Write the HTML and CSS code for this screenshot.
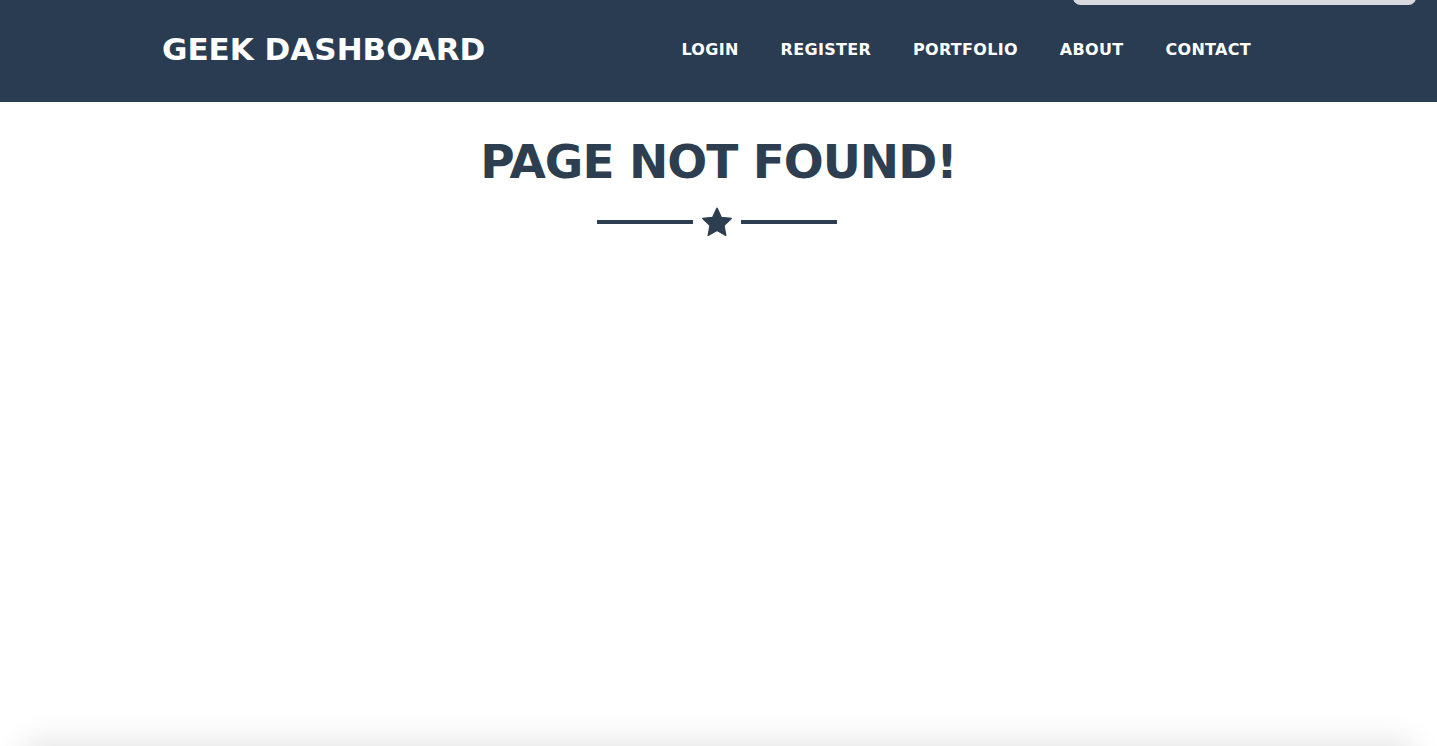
FILE: index.html
```html
<!DOCTYPE html>
<html>
<head>
<meta charset="utf-8">
<link rel="stylesheet" href="styles.css">
</head>
<body>
<div class="topbar"></div>
<header class="nav">
  <a class="brand" href="#">GEEK DASHBOARD</a>
  <nav class="links">
    <a href="#">LOGIN</a>
    <a href="#">REGISTER</a>
    <a href="#">PORTFOLIO</a>
    <a href="#">ABOUT</a>
    <a href="#">CONTACT</a>
  </nav>
</header>
<main class="content">
  <h1 class="title">PAGE NOT FOUND!</h1>
  <div class="divider">
    <span class="line"></span>
    <svg class="star" viewBox="0 0 24 24" width="32" height="32"><path d="M12 1.6l3.2 6.9 7.5.9-5.5 5.2 1.4 7.4L12 18.3 5.4 22l1.4-7.4L1.3 9.4l7.5-.9z" fill="#2c3e50" stroke="#2c3e50" stroke-width="1" stroke-linejoin="round"/></svg>
    <span class="line"></span>
  </div>
</main>
<div class="shade"></div>
</body>
</html>
```
FILE: styles.css
```css
html, body {
  margin: 0;
  padding: 0;
  background: #fff;
  height: 100%;
  overflow: hidden;
}
body {
  font-family: "DejaVu Sans", sans-serif;
  color: #2c3e50;
}
.topbar {
  position: absolute;
  top: -10px;
  left: 1073px;
  width: 343px;
  height: 15px;
  background: #d8d8dd;
  border-radius: 8px;
}
.nav {
  height: 102px;
  background: #2a3c52;
  display: flex;
  align-items: center;
  justify-content: space-between;
  padding: 0 186px 0 162px;
  box-sizing: border-box;
}
.brand {
  color: #fff;
  text-decoration: none;
  font-weight: bold;
  font-size: 31px;
  letter-spacing: 0;
  line-height: 1;
  margin-top: -3px;
}
.links {
  display: flex;
  gap: 42px;
  margin-top: -3px;
}
.links a {
  color: #fff;
  text-decoration: none;
  font-weight: bold;
  font-size: 16px;
  letter-spacing: 0.3px;
  line-height: 1;
}
.content {
  display: flex;
  flex-direction: column;
  align-items: center;
}
.title {
  margin: 30px 0 0;
  font-size: 47px;
  font-weight: bold;
  line-height: 60px;
  letter-spacing: -1px;
  color: #2c3e50;
}
.divider {
  display: flex;
  align-items: center;
  gap: 8px;
  margin-top: 14px;
  margin-right: 4px;
}
.line {
  width: 96px;
  height: 4px;
  background: #2c3e50;
  display: block;
}
.star {
  display: block;
}
.shade {
  position: fixed;
  left: 20px;
  right: 20px;
  top: 746px;
  height: 40px;
  border-radius: 20px;
  box-shadow: 0 -6px 30px rgba(0,0,0,0.1);
}
```
